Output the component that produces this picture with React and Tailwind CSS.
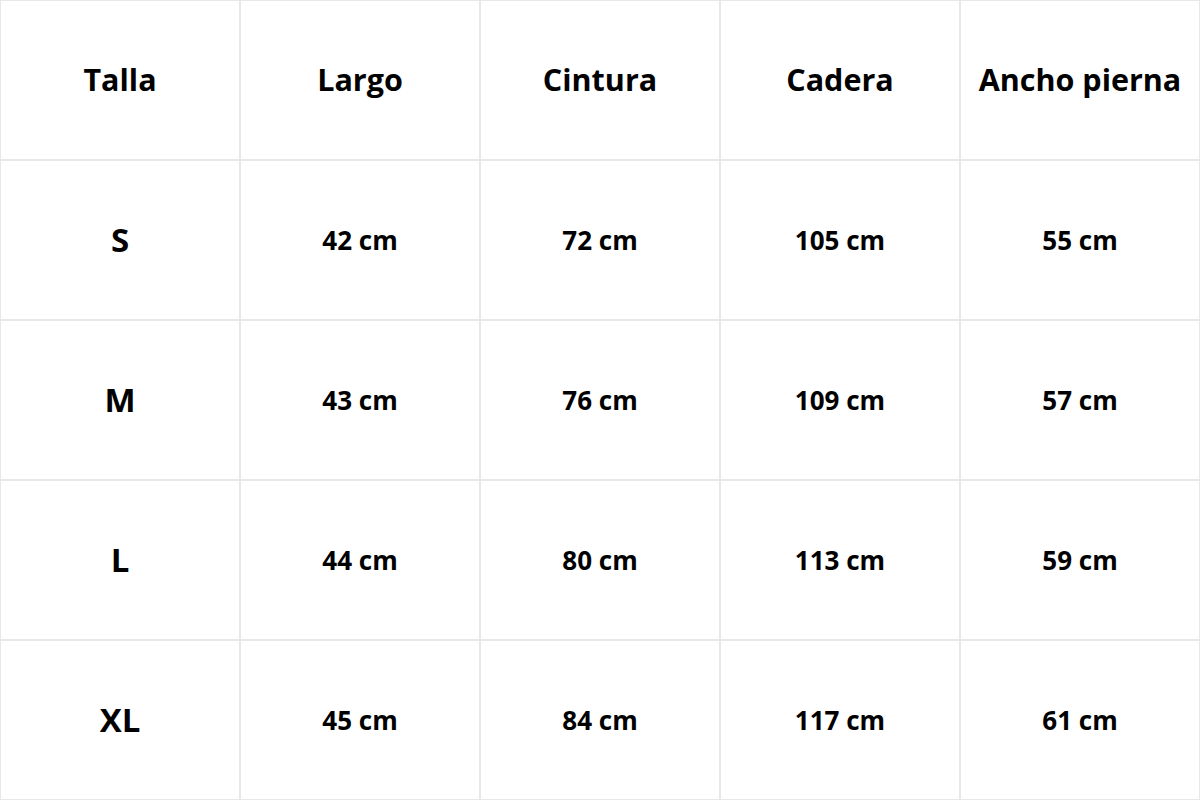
import React from 'react';

const headers = ['Talla', 'Largo', 'Cintura', 'Cadera', 'Ancho pierna'];

const rows = [
  ['S', '42 cm', '72 cm', '105 cm', '55 cm'],
  ['M', '43 cm', '76 cm', '109 cm', '57 cm'],
  ['L', '44 cm', '80 cm', '113 cm', '59 cm'],
  ['XL', '45 cm', '84 cm', '117 cm', '61 cm'],
];

const App = () => {
  return (
    <div
      className="w-[1200px] h-[800px] bg-white text-black grid grid-cols-5 grid-rows-5"
      style={{ fontFamily: '"Open Sans", "Liberation Sans", sans-serif' }}
    >
      {headers.map((h) => (
        <div
          key={h}
          className="border border-[#e8e8e8] flex items-center justify-center text-[30.5px] font-bold whitespace-nowrap"
        >
          {h}
        </div>
      ))}
      {rows.map((row) =>
        row.map((cell, idx) => (
          <div
            key={row[0] + idx}
            className={`border border-[#e8e8e8] flex items-center justify-center font-bold ${
              idx === 0 ? 'text-[33px]' : 'text-[26px]'
            }`}
          >
            {cell}
          </div>
        ))
      )}
    </div>
  );
};

export default App;
